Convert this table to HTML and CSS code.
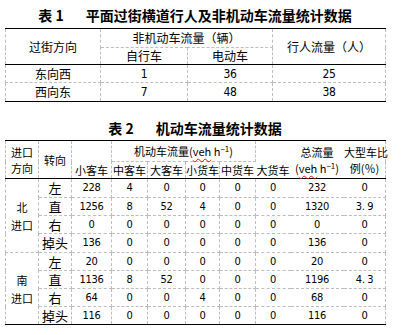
FILE: index.html
```html
<!DOCTYPE html>
<html lang="zh">
<head>
<meta charset="utf-8">
<link rel="stylesheet" href="styles.css">
</head>
<body>
<div class="page">
  <div class="title t1"><span>表 1</span><span class="gap"></span><span>平面过街横道行人及非机动车流量统计数据</span></div>
  <table class="tbl tbl1">
    <colgroup><col class="c95"><col class="c87"><col class="c85"><col class="c113"></colgroup>
    <thead>
      <tr class="h19">
        <th rowspan="2" class="hb">过街方向</th>
        <th colspan="2">非机动车流量（辆）</th>
        <th rowspan="2" class="hb">行人流量（人）</th>
      </tr>
      <tr class="h17">
        <th class="hb">自行车</th>
        <th class="hb">电动车</th>
      </tr>
    </thead>
    <tbody>
      <tr class="h18"><td>东向西</td><td class="num">1</td><td class="num">36</td><td class="num">25</td></tr>
      <tr class="h19"><td>西向东</td><td class="num">7</td><td class="num">48</td><td class="num">38</td></tr>
    </tbody>
  </table>

  <div class="title t2"><span>表 2</span><span class="gap"></span><span>机动车流量统计数据</span></div>
  <table class="tbl tbl2">
    <colgroup>
      <col class="c33"><col class="c33"><col class="c40"><col class="c36"><col class="c38">
      <col class="c34"><col class="c36"><col class="c35"><col class="c53"><col class="c42">
    </colgroup>
    <thead>
      <tr class="h21">
        <th rowspan="2" class="hb">进口<br>方向</th>
        <th rowspan="2" class="hb">转向</th>
        <th rowspan="2" class="hb bottom">小客车</th>
        <th colspan="4">机动车流量(<span class="wavy">veh</span> h<sup>−1</sup>)</th>
        <th rowspan="2" class="hb bottom nol">大货车</th>
        <th rowspan="2" class="hb nol">总流量<br>(<span class="wavy">veh</span> h<sup>−1</sup>)</th>
        <th rowspan="2" class="hb">大型车比<br>例(％)</th>
      </tr>
      <tr class="h16">
        <th class="hb">中客车</th>
        <th class="hb">大客车</th>
        <th class="hb">小货车</th>
        <th class="hb">中货车</th>
      </tr>
    </thead>
    <tbody>
      <tr class="h19"><td rowspan="4" class="dir">北<br>进口</td><td class="turn">左</td><td class="num">228</td><td class="num">4</td><td class="num">0</td><td class="num">0</td><td class="num">0</td><td class="num nol">0</td><td class="num nol">232</td><td class="num">0</td></tr>
      <tr class="h18"><td class="turn">直</td><td class="num">1256</td><td class="num">8</td><td class="num">52</td><td class="num">4</td><td class="num">0</td><td class="num nol">0</td><td class="num nol">1320</td><td class="num">3. 9</td></tr>
      <tr class="h18"><td class="turn">右</td><td class="num">0</td><td class="num">0</td><td class="num">0</td><td class="num">0</td><td class="num">0</td><td class="num nol">0</td><td class="num nol">0</td><td class="num">0</td></tr>
      <tr class="h19"><td class="turn">掉头</td><td class="num">136</td><td class="num">0</td><td class="num">0</td><td class="num">0</td><td class="num">0</td><td class="num nol">0</td><td class="num nol">136</td><td class="num">0</td></tr>
      <tr class="h18"><td rowspan="4" class="dir">南<br>进口</td><td class="turn">左</td><td class="num">20</td><td class="num">0</td><td class="num">0</td><td class="num">0</td><td class="num">0</td><td class="num nol">0</td><td class="num nol">20</td><td class="num">0</td></tr>
      <tr class="h18"><td class="turn">直</td><td class="num">1136</td><td class="num">8</td><td class="num">52</td><td class="num">0</td><td class="num">0</td><td class="num nol">0</td><td class="num nol">1196</td><td class="num">4. 3</td></tr>
      <tr class="h18"><td class="turn">右</td><td class="num">64</td><td class="num">0</td><td class="num">0</td><td class="num">4</td><td class="num">0</td><td class="num nol">0</td><td class="num nol">68</td><td class="num">0</td></tr>
      <tr class="h18"><td class="turn">掉头</td><td class="num">116</td><td class="num">0</td><td class="num">0</td><td class="num">0</td><td class="num">0</td><td class="num nol">0</td><td class="num nol">116</td><td class="num">0</td></tr>
    </tbody>
  </table>
</div>
</body>
</html>
```
FILE: styles.css
```css
html, body {
  margin: 0;
  padding: 0;
  background: #fff;
}
body {
  font-family: "Noto Sans CJK SC", "Noto Sans", sans-serif;
  color: #000;
}
.page {
  width: 380px;
  margin-left: 5px;
}
.title {
  text-align: center;
  font-size: 14px;
  font-weight: 700;
  line-height: 20px;
  white-space: nowrap;
}
.title .gap {
  display: inline-block;
  width: 22px;
}
.t1 {
  padding-top: 5px;
  padding-bottom: 3px;
}
.t2 {
  padding-top: 16px;
  padding-bottom: 2px;
}
.tbl {
  width: 380px;
  table-layout: fixed;
  border-collapse: collapse;
  border-top: 1px solid #000;
  border-bottom: 1px solid #000;
  border-left: 1px dashed #bdbdbd;
  border-right: 1px dashed #bdbdbd;
}
.tbl th, .tbl td {
  border: 1px dashed #bdbdbd;
  padding: 0;
  text-align: center;
  vertical-align: middle;
  font-weight: 400;
  white-space: nowrap;
  line-height: 16px;
}
.tbl1 th, .tbl1 td { font-size: 12px; }
.tbl2 th, .tbl2 td { font-size: 11px; }
.tbl th.hb { border-bottom: 1px solid #000; }
.tbl th.bottom { vertical-align: bottom; }
.tbl .nol { border-left-color: transparent; border-right-color: transparent; }
.tbl2 .dir { line-height: 18px; }
.tbl2 .turn { font-size: 13px; }
.num {
  font-family: "DejaVu Sans Condensed", "Liberation Sans Narrow", "Noto Sans CJK SC", sans-serif;
  font-stretch: condensed;
  letter-spacing: -0.3px;
}
sup {
  font-size: 8px;
  line-height: 0;
  vertical-align: 4px;
}
.wavy {
  text-decoration: underline wavy #e01010;
  text-decoration-thickness: 1px;
  text-underline-offset: 2px;
}
.c95 { width: 95px; }
.c87 { width: 87px; }
.c85 { width: 85px; }
.c113 { width: 113px; }
.c33 { width: 33px; }
.c40 { width: 40px; }
.c36 { width: 36px; }
.c38 { width: 38px; }
.c34 { width: 34px; }
.c35 { width: 35px; }
.c53 { width: 53px; }
.c42 { width: 42px; }
.h16 { height: 16px; }
.h17 { height: 17px; }
.h18 { height: 18px; }
.h19 { height: 19px; }
.h21 { height: 21px; }
```
